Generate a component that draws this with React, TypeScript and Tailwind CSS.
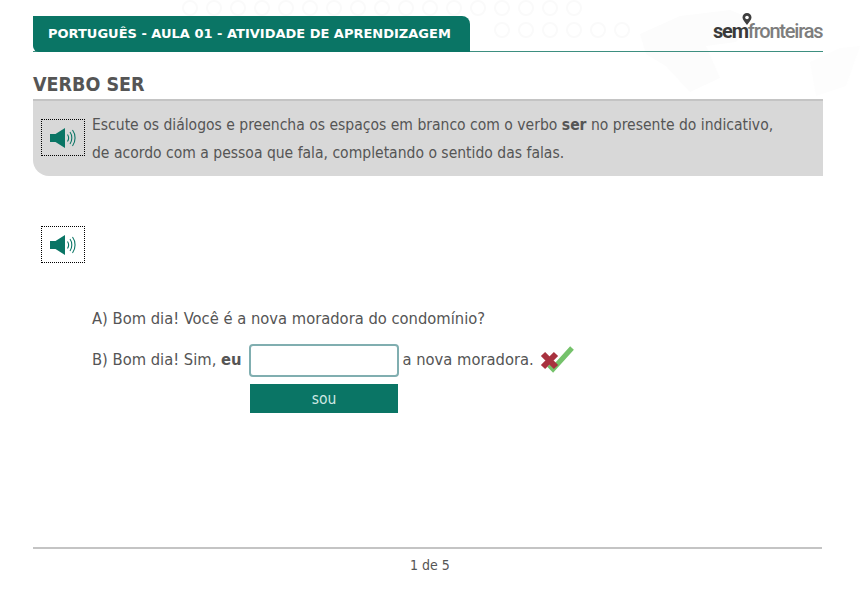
function Speaker() {
  return (
    <svg width="28" height="22" viewBox="0 0 28 22" fill="none">
      <path d="M1 7h5.500L16 1v20l-9.500-6H1z" fill="#0a7565" />
      <path d="M18.500 7.500c1.300 2 1.300 5 0 7M21 5c2.400 3.200 2.400 8.800 0 12M23.500 3c3.400 4.500 3.400 11.500 0 16" stroke="#0a7565" strokeWidth="1.100" />
    </svg>
  );
}

function AudioButton() {
  return (
    <button className="flex h-[37px] w-[44px] shrink-0 items-center justify-center border border-dotted border-black">
      <Speaker />
    </button>
  );
}

function MapBackground() {
  return (
    <svg className="absolute left-[170px] top-0" width="690" height="100" viewBox="0 0 690 100" fill="none">
      <g stroke="#fafafa" strokeWidth="2">
        {[0, 1, 2, 3, 4, 5, 6, 7, 8, 9, 10, 11, 12, 13, 14, 15, 16].map((i) => (
          <circle key={i} cx={20 + i * 24} cy="8" r="7" />
        ))}
        {[13, 14, 15, 16, 17, 18].map((i) => (
          <circle key={i} cx={20 + i * 24} cy="30" r="7" />
        ))}
      </g>
      <path d="M470 34l40-18 50-6 20 8-14 24-30 4 14 32-30 14-24-26-20-12z" fill="#fcfcfc" />
      <path d="M640 62l30-14 20-2-14 40-30 10z" fill="#fdfdfd" />
    </svg>
  );
}

function Logo() {
  return (
    <div className="relative mb-[8px] h-[28px] w-[110px] font-['Roboto',sans-serif] text-[20px] leading-[28px] tracking-[-1.200px]">
      <svg className="absolute left-[28px] top-[-3px]" width="12" height="14" viewBox="0 0 12 14">
        <path d="M6 1a4.500 4.500 0 0 1 4.500 4.500C10.500 8 8 10 6 13 4 10 1.500 8 1.500 5.500A4.500 4.500 0 0 1 6 1z" fill="#3f3f3f" />
        <circle cx="6" cy="5.500" r="1.800" fill="#fff" />
      </svg>
      <span className="absolute bottom-[-2px] left-0 whitespace-nowrap">
        <span className="font-bold text-[#3a3a3a]">sem</span>
        <span className="font-medium text-[#7d7d7d]">fronteiras</span>
      </span>
    </div>
  );
}

export default function App() {
  return (
    <div className="relative flex h-[600px] w-[860px] flex-col overflow-hidden bg-white px-[33px] pt-4 font-['DejaVu_Sans_Condensed','DejaVu_Sans',sans-serif] text-[16.400px] text-[#555555]">
      <MapBackground />

      {/* Header */}
      <div className="relative flex h-9 w-[790px] items-end justify-between border-b border-[#3d8f80]">
        <div className="mb-[-1px] flex h-9 w-[437px] items-center rounded-tr-lg rounded-bl-md bg-[#0a7565] pl-[15px] font-['DejaVu_Sans',sans-serif] text-[13px] font-bold text-white">
          PORTUGUÊS - AULA 01 - ATIVIDADE DE APRENDIZAGEM
        </div>
        <Logo />
      </div>

      {/* Title */}
      <h1 className="relative mt-[21px] text-[19.500px] leading-[24px] font-bold text-[#555555]">VERBO SER</h1>

      {/* Instructions */}
      <div className="relative mt-[2px] flex h-[77px] w-[790px] gap-[7px] rounded-bl-2xl border-t-2 border-[#c4c4c4] bg-[#d8d8d8] pt-[10px] pl-2 text-[15.540px]">
        <div className="pt-[8px]">
          <AudioButton />
        </div>
        <p className="leading-[28px]">
          Escute os diálogos e preencha os espaços em branco com o verbo <b>ser</b> no presente do indicativo,
          <br />
          de acordo com a pessoa que fala, completando o sentido das falas.
        </p>
      </div>

      <div className="relative mt-[50px] ml-2">
        <AudioButton />
      </div>

      {/* Dialogue */}
      <div className="relative mt-[44px] ml-[59px]">
        <p className="leading-[24px]">A) Bom dia! Você é a nova moradora do condomínio?</p>
        <div className="mt-[13px] flex items-center">
          <span>
            B) Bom dia! Sim, <b>eu</b>
          </span>
          <div className="ml-[7px] h-[33px] w-[150px] rounded-sm border-2 border-[#80aeb0] bg-white" />
          <span className="ml-[4px]">a nova moradora.</span>
          <svg className="ml-[6px] mt-[-3px]" width="34" height="28" viewBox="0 0 34 28">
            <path d="M9 20l4 4L32 3" stroke="#75c26b" strokeWidth="5" fill="none" />
            <path d="M3 9l13 13M16 9L3 22" stroke="#a8323f" strokeWidth="6" />
          </svg>
        </div>
        <div className="mt-[7px] ml-[158px] flex h-[29px] w-[148px] items-center justify-center bg-[#0a7565] pt-[2px] text-[15.500px] text-[#cfe8e2]">
          sou
        </div>
      </div>

      {/* Footer */}
      <div className="relative mt-auto mb-[25px] w-[789px] border-t-2 border-[#c4c4c4] pt-[6px] pl-[5px] text-center text-[14px] leading-[20px]">
        1 de 5
      </div>
    </div>
  );
}
